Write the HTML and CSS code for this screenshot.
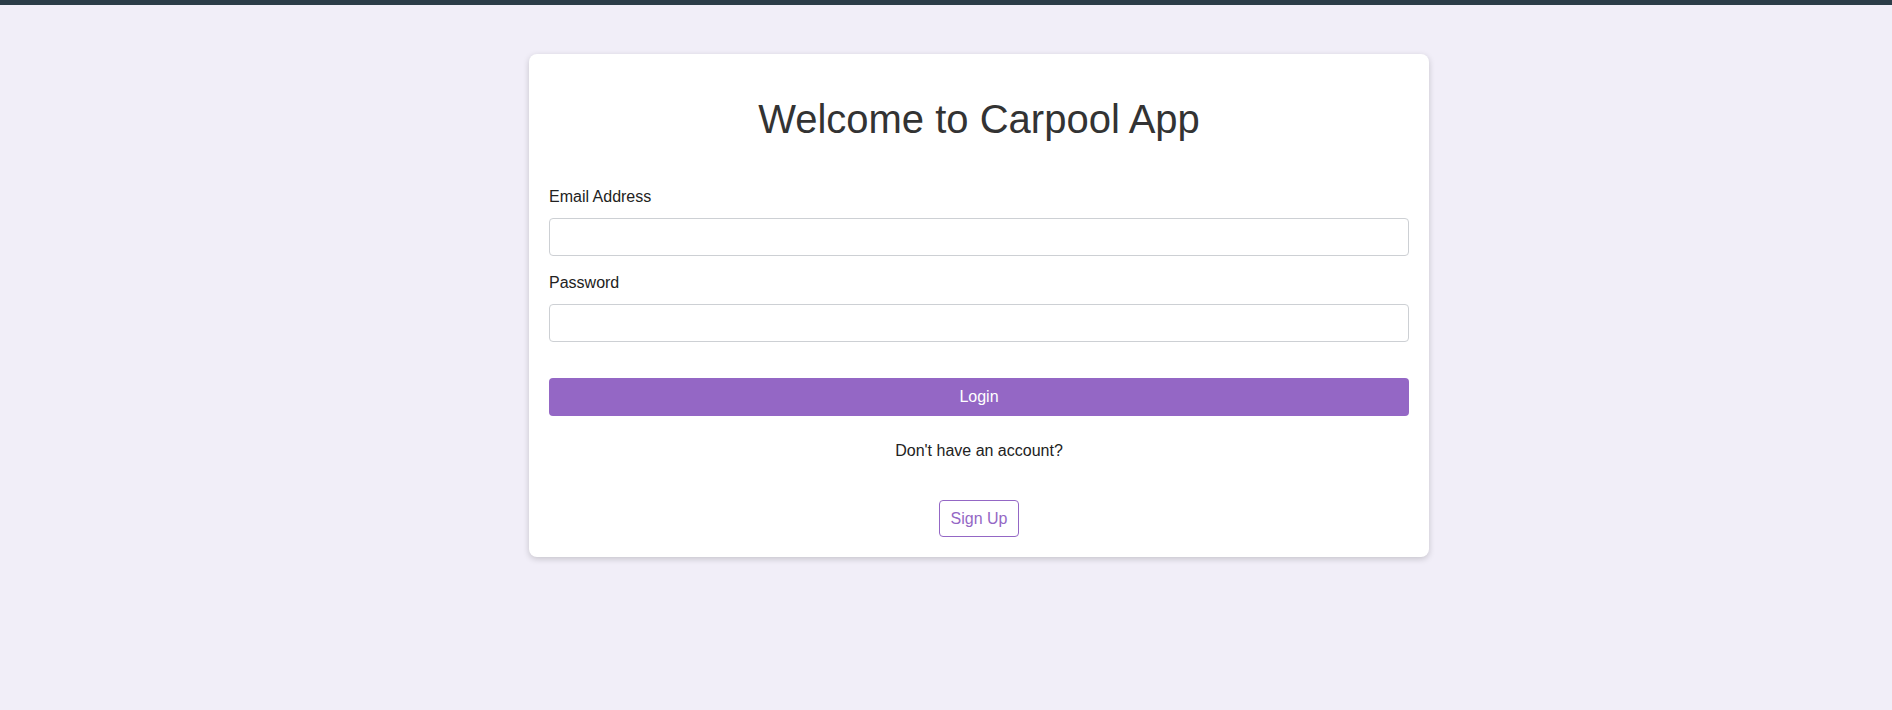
FILE: index.html
```html
<!DOCTYPE html>
<html lang="en">
<head>
<meta charset="utf-8">
<title>Carpool App</title>
<link rel="stylesheet" href="styles.css">
</head>
<body>
<div class="topbar"></div>
<main class="page">
  <section class="card">
    <h1 class="title">Welcome to Carpool App</h1>
    <form class="form">
      <div class="group">
        <label class="label" for="email">Email Address</label>
        <input class="input" id="email" type="email">
      </div>
      <div class="group">
        <label class="label" for="password">Password</label>
        <input class="input" id="password" type="password">
      </div>
      <button class="btn-login" type="button">Login</button>
    </form>
    <p class="prompt">Don't have an account?</p>
    <div class="signup-row">
      <button class="btn-signup" type="button">Sign Up</button>
    </div>
  </section>
</main>
</body>
</html>
```

FILE: styles.css
```css
* { box-sizing: border-box; }

html, body {
  margin: 0;
  padding: 0;
}

body {
  background: #f1eef8;
  font-family: "Liberation Sans", Arial, Helvetica, sans-serif;
  font-size: 16px;
  color: #222;
  min-height: 710px;
}

.topbar {
  height: 5px;
  background: #2c3d48;
}

.page {
  display: flex;
  justify-content: center;
  padding-top: 49px;
  padding-left: 66px;
}

.card {
  width: 900px;
  background: #ffffff;
  border-radius: 8px;
  box-shadow: 0 2px 6px rgba(0, 0, 0, 0.18);
  padding: 20px;
}

.title {
  margin: 22px 0 46px;
  font-size: 40px;
  font-weight: normal;
  line-height: 46px;
  text-align: center;
  color: #333;
}

.form {
  display: flex;
  flex-direction: column;
}

.group {
  display: flex;
  flex-direction: column;
  margin-bottom: 18px;
}

.label {
  line-height: 18px;
  margin-bottom: 12px;
  color: #222;
}

.input {
  height: 38px;
  border: 1px solid #cdd0d4;
  border-radius: 4px;
  padding: 0 10px;
  font-family: inherit;
  font-size: 16px;
  background: #fff;
}

.btn-login {
  margin-top: 18px;
  height: 38px;
  border: none;
  border-radius: 4px;
  background: #9467c5;
  color: #fff;
  font-family: inherit;
  font-size: 16px;
}

.prompt {
  margin: 26px 0 0;
  line-height: 18px;
  text-align: center;
  color: #222;
}

.signup-row {
  display: flex;
  justify-content: center;
  margin-top: 40px;
}

.btn-signup {
  height: 37px;
  padding: 0 11px;
  border: 1px solid #9467c5;
  border-radius: 4px;
  background: #fff;
  color: #9467c5;
  font-family: inherit;
  font-size: 16px;
}
```
